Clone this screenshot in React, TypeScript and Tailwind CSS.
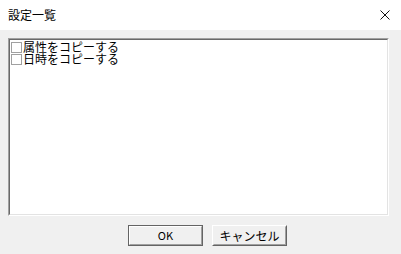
export default function App() {
  const font = { fontFamily: '"Noto Sans CJK JP", "Noto Sans", sans-serif' };
  const items = ['属性をコピーする', '日時をコピーする'];

  return (
    <div className="w-[401px] h-[254px] bg-[#f0f0f0] flex flex-col overflow-hidden" style={font}>
      <div className="h-[30px] bg-white flex items-center justify-between pl-[8px] pr-[11px]">
        <span className="text-[12px] leading-none text-black">設定一覧</span>
        <svg width="10" height="10" viewBox="0 0 10 10" className="text-[#111]">
          <path d="M0.5 0.5 L9.5 9.5 M9.5 0.5 L0.5 9.5" stroke="currentColor" strokeWidth="1" />
        </svg>
      </div>

      <div className="pt-[8px] pl-[8px] pr-[12px]">
        <div className="h-[178px] border border-t-[#a0a0a0] border-l-[#a0a0a0] border-r-white border-b-white">
          <div className="h-full border border-t-[#696969] border-l-[#696969] border-r-[#e3e3e3] border-b-[#e3e3e3] bg-white pt-[1px] pl-[1px]">
            {items.map((label) => (
              <div key={label} className="flex items-center h-[12px] text-[12px] leading-none text-black">
                <span className="w-[11px] h-[11px] border border-[#a0a0a0] bg-white mr-[1px] shrink-0" />
                <span>{label}</span>
              </div>
            ))}
          </div>
        </div>
      </div>

      <div className="flex gap-[9px] pl-[128px] pt-[9px]">
        <button className="w-[75px] h-[21px] border border-[#646464] bg-[#f0f0f0] p-0">
          <div className="h-full border border-t-white border-l-white border-r-[#a0a0a0] border-b-[#a0a0a0] flex items-center justify-center text-[11px] leading-none text-black">
            OK
          </div>
        </button>
        <button className="w-[75px] h-[21px] border border-t-white border-l-white border-r-[#646464] border-b-[#646464] bg-[#f0f0f0] p-0">
          <div className="h-full border border-t-[#f0f0f0] border-l-[#f0f0f0] border-r-[#a0a0a0] border-b-[#a0a0a0] flex items-center justify-center text-[12px] leading-none text-black">
            キャンセル
          </div>
        </button>
      </div>
    </div>
  );
}
